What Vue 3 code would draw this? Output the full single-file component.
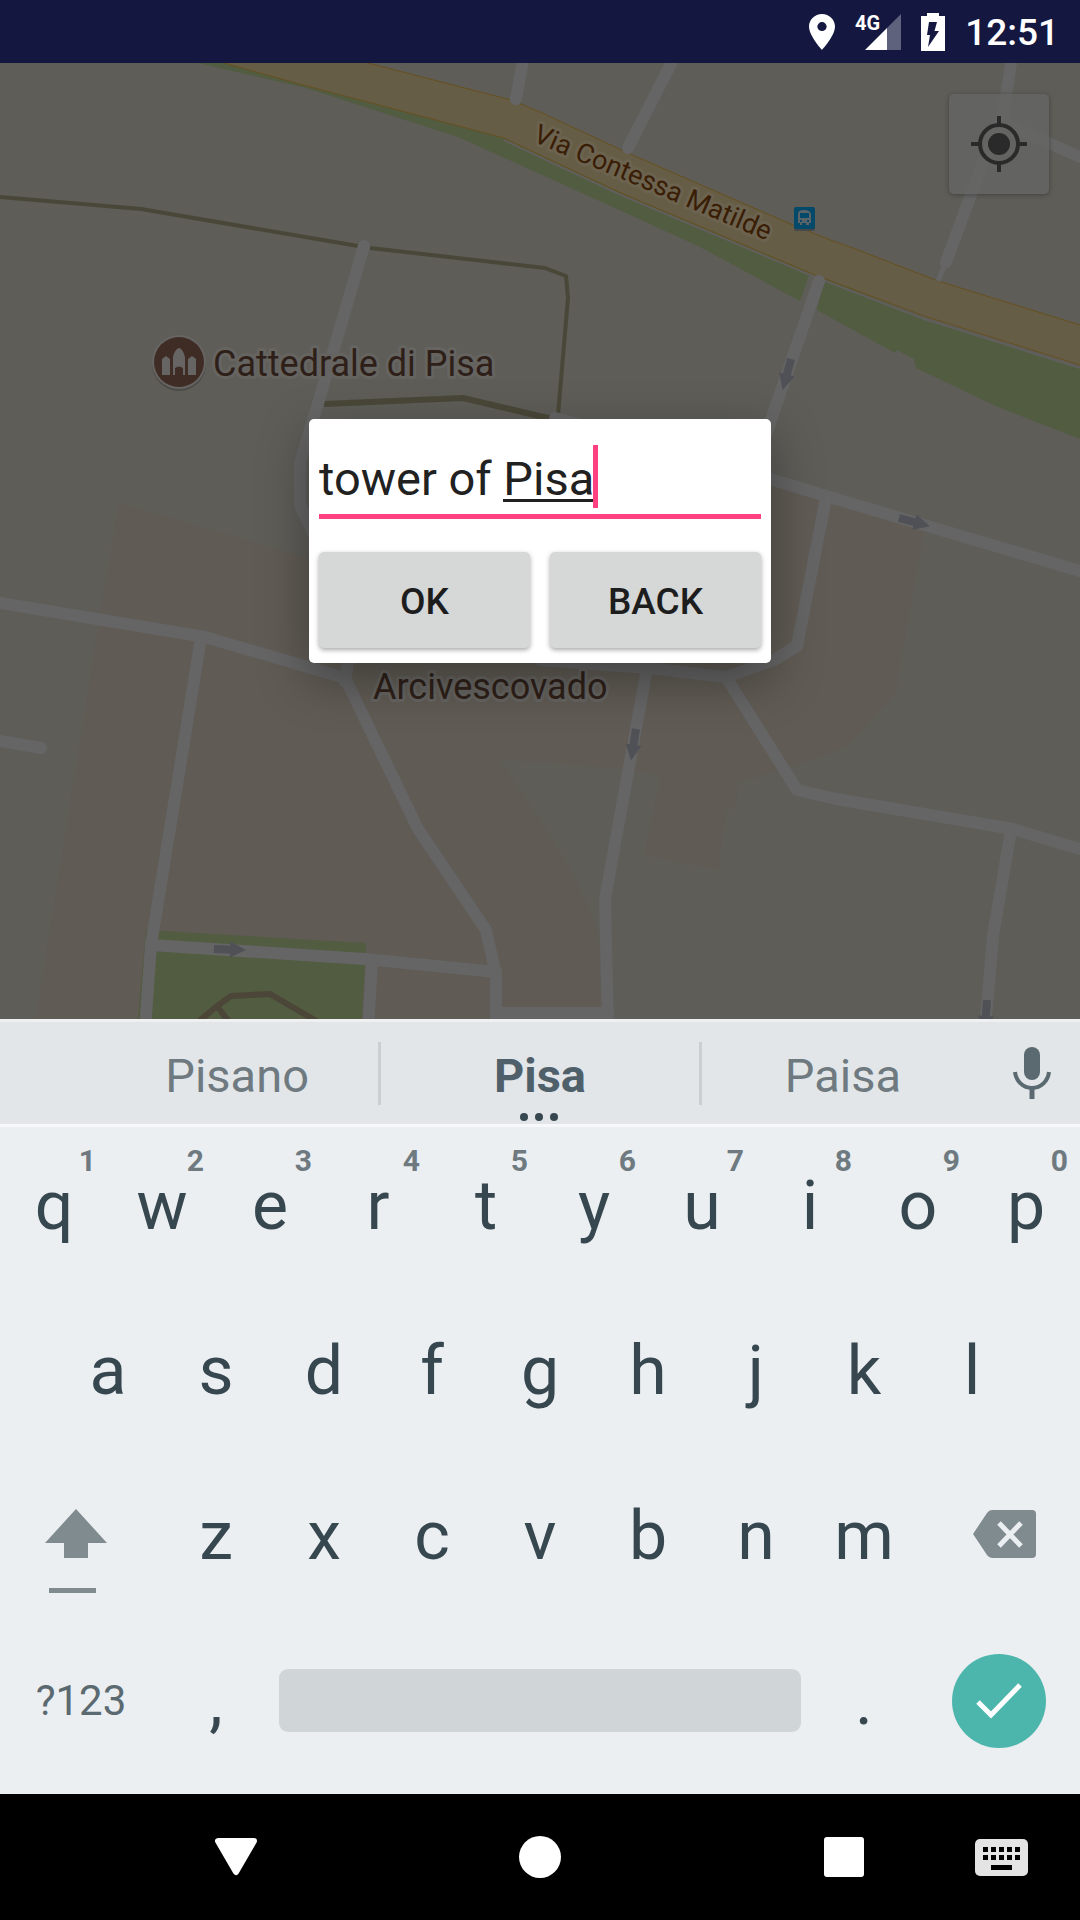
<script setup>
import { ref } from 'vue'

const query = ref('tower of Pisa')

const topRow = [
  ['q', 1], ['w', 2], ['e', 3], ['r', 4], ['t', 5],
  ['y', 6], ['u', 7], ['i', 8], ['o', 9], ['p', 0],
]
const homeRow = ['a', 's', 'd', 'f', 'g', 'h', 'j', 'k', 'l']
const bottomRow = ['z', 'x', 'c', 'v', 'b', 'n', 'm']

// Street centre lines on the map canvas
const streets = [
  'M525 50L516 99',
  'M678 50L628 148',
  'M1013 50L1002 122L984 160L946 262',
  'M1002 122L1080 157',
  'M819 281L772 417L758 460',
  'M364 246L319 400L300 463L300 505L330 570',
  'M555 418L600 430',
  'M0 603L205 637L345 678L418 829L486 930L496 975V1030',
  'M350 650L345 682',
  'M201 638L151 945L145 1030',
  'M151 945L365 959L496 972',
  'M372 962L368 1030',
  'M0 741L41 748',
  'M760 476L826 496L1080 571',
  'M826 498L797 646L774 660L726 677L647 668L540 660',
  'M726 677L797 790L836 799L1013 829L1080 849',
  'M1011 830L993 936L985 1030',
  'M647 668L605 899L608 1030',
]
const arrows = [
  [791, 359, 105],
  [899, 518, 15],
  [636, 729, 99],
  [214, 949, 2],
  [987, 1000, 94],
]
// Keycap holes of the input-method icon
const keyHoles = [0, 1].flatMap((r) => [0, 1, 2, 3, 4].map((c) => [8 + c * 8, 8 + r * 8]))
</script>

<template>
  <div class="screen">
    <header class="status">
      <svg width="26" height="36" viewBox="5 2 14 20" preserveAspectRatio="none" aria-hidden="true">
        <path fill="#fff" d="M12 2C8.130 2 5 5.130 5 9c0 5.250 7 13 7 13s7-7.750 7-13c0-3.870-3.130-7-7-7zm0 9.500a2.500 2.500 0 1 1 0-5 2.500 2.500 0 0 1 0 5z" />
      </svg>
      <svg width="46" height="46" viewBox="0 -4 46 46" aria-hidden="true">
        <path fill="#fff" fill-opacity=".32" d="M46 1V37H32V15z" />
        <path fill="#fff" d="M10 37L32 15V37z" />
        <text class="net" x="0" y="17">4G</text>
      </svg>
      <svg width="24" height="38" viewBox="0 0 24 38" aria-hidden="true">
        <path fill="#fff" d="M6 0H18V3H24V38H0V3H6z" />
        <path fill="#141840" d="M8 9H16L13.500 18H18L7 34L9 22H6z" />
      </svg>
      <time class="clock">12:51</time>
    </header>

    <main class="map">
      <svg class="canvas" viewBox="0 63 1080 956" preserveAspectRatio="xMidYMid slice" aria-hidden="true">
        <rect y="63" width="1080" height="956" fill="#5e5d58" />
        <path class="block" d="M119 503L308 558L771 480L924 530L895 695L857 735L843 748L812 760L788 768L738 782L735 808L726 810L718 870L644 855L661 775L623 769L540 762L499 759L540 820L574 875L598 930L602 1019H36L101 610z" />
        <path class="park" d="M198 63L306 88L458 137L540 174L626 213L700 247L800 301L810 272L504 137L224 63z" />
        <path class="park" d="M824 278L817 310L895 353L897 350L914 359L916 368L998 407L1080 439V368L924 318z" />
        <path class="park" d="M146 930L366 943L362 1019H138z" />
        <path class="trail" d="M198 1022L217 1006L231 996L270 994L318 1022M217 1006L229 1022" />
        <path class="path" d="M0 197L141 209L358 246M370 248L545 268L566 276L568 298L558 415" />
        <path class="path wide" d="M324 404L463 398L552 419" />
        <path class="verge" d="M504 140L540 157L621 195L815 277L924 319L1080 368" />
        <path fill="#665d46" d="M224 63L303 85L504 138L540 155L621 193L815 275L924 316L1080 365V325L938 281L845 245L833 241L793 225L630 154L540 112L511 100L368 63z" />
        <path class="kerb" d="M224 63L303 85L504 138L540 155L621 193L815 275L924 316L1080 365M368 63L511 100L540 112L630 154L793 225L833 241L845 245L938 281L1080 325" />
        <path v-for="d in streets" :key="d" class="street" :d="d" />
        <path class="street thin" d="M946 262L938 281" />
        <path class="street square" d="M491 1013H614" />
        <path
          v-for="a in arrows" :key="a.join()" fill="#505157"
          d="M0 -4H16V-8L32 0L16 8V4H0z" :transform="`translate(${a[0]} ${a[1]}) rotate(${a[2]})`"
        />

        <circle cx="179" cy="364" r="27" fill="#4c4b47" />
        <circle cx="179" cy="362" r="27" fill="#666563" />
        <circle cx="179" cy="362" r="25" fill="#3f2c25" />
        <path fill="#666563" d="M162 375V359L166 356L170 359V375zM188 375V359L192 356L196 359V375zM173 375V357C174 352 177 348 179 348S184 352 185 357V375H183V368Q179 365 175 368V375z" />

        <rect x="794" y="209" width="21" height="22" rx="2" fill="#46484a" />
        <rect x="794" y="207" width="21" height="22" rx="2" fill="#03496a" />
        <path fill="#5d6468" fill-rule="evenodd" d="M798 214Q798 210 804 210T811 214V223H809V225H806V223H802V225H800V223H798zM800 213V218H809V213zM800 220V222H802V220zM807 220V222H809V220z" />

        <text class="label" x="213" y="376">Cattedrale di Pisa</text>
        <text class="label" x="373" y="699">Arcivescovado</text>
        <text class="label road" transform="translate(532 141) rotate(23)">Via Contessa Matilde</text>
      </svg>

      <button class="locate" type="button" aria-label="My location">
        <svg width="56" height="56" viewBox="0 0 56 56">
          <circle cx="28" cy="28" r="19" fill="none" stroke="#2a2a2a" stroke-width="4" />
          <circle cx="28" cy="28" r="11" fill="#2a2a2a" />
          <path stroke="#2a2a2a" stroke-width="4" d="M28 0V8M28 48V56M0 28H8M48 28H56" />
        </svg>
      </button>

      <form class="dialog" role="dialog" aria-label="Search place" @submit.prevent>
        <div class="field">
          <input v-model="query" class="query" type="text" aria-label="Place" />
          <span class="composing"></span>
          <span class="caret"></span>
        </div>
        <div class="actions">
          <button class="action" type="submit">OK</button>
          <button class="action" type="button">BACK</button>
        </div>
      </form>
    </main>

    <section class="keyboard" aria-label="Keyboard">
      <div class="strip">
        <button class="hint" type="button">Pisano</button>
        <span class="rule"></span>
        <button class="hint best" type="button">
          Pisa
          <svg class="more" width="38" height="8" viewBox="0 0 38 8" aria-hidden="true">
            <g fill="#37474f"><circle cx="4" cy="4" r="4" /><circle cx="19" cy="4" r="4" /><circle cx="34" cy="4" r="4" /></g>
          </svg>
        </button>
        <span class="rule"></span>
        <button class="hint" type="button">Paisa</button>
        <button class="mic" type="button" aria-label="Voice input">
          <svg width="38" height="52" viewBox="0 0 38 52">
            <rect x="11" y="0" width="16" height="33" rx="8" fill="#5b6a70" />
            <path fill="none" stroke="#5b6a70" stroke-width="4" d="M2 25C3 34 10 41 19 41S35 34 36 25" />
            <path stroke="#5b6a70" stroke-width="5" d="M19 41V52" />
          </svg>
        </button>
      </div>

      <div class="keys">
        <div class="row">
          <button v-for="[letter, digit] in topRow" :key="letter" class="key" type="button">
            {{ letter }}<span class="digit">{{ digit }}</span>
          </button>
        </div>
        <div class="row inset">
          <button v-for="letter in homeRow" :key="letter" class="key" type="button">{{ letter }}</button>
        </div>
        <div class="row">
          <button class="key edge shift" type="button" aria-label="Shift">
            <svg width="62" height="84" viewBox="0 0 62 84">
              <path fill="#808b8f" d="M31 0L62 34H43V49H19V34H0zM4 79H51V84H4z" />
            </svg>
          </button>
          <button v-for="letter in bottomRow" :key="letter" class="key" type="button">{{ letter }}</button>
          <button class="key edge erase" type="button" aria-label="Backspace">
            <svg width="63" height="48" viewBox="0 0 63 48">
              <path fill="#808b8f" d="M0 24L14 3Q16 0 19 0H59Q63 0 63 4V44Q63 48 59 48H19Q16 48 14 45z" />
              <path stroke="#ebeff2" stroke-width="5" d="M26 13L48 36M48 13L26 36" />
            </svg>
          </button>
        </div>
        <div class="row">
          <button class="key edge symbols" type="button">?123</button>
          <button class="key" type="button">,</button>
          <button class="key space" type="button" aria-label="Space"><span class="bar"></span></button>
          <button class="key" type="button">.</button>
          <button class="key edge" type="button" aria-label="Done">
            <span class="done">
              <svg width="46" height="36" viewBox="0 0 46 36">
                <path fill="none" stroke="#fff" stroke-width="5" d="M2 19L15 32L44 2" />
              </svg>
            </span>
          </button>
        </div>
      </div>
    </section>

    <nav class="nav" aria-label="System">
      <button type="button" aria-label="Back">
        <svg width="42" height="38" viewBox="0 0 42 38">
          <path fill="#fff" stroke="#fff" stroke-width="6" stroke-linejoin="round" d="M3 3H39L21 34z" />
        </svg>
      </button>
      <button type="button" aria-label="Home">
        <svg width="42" height="42" viewBox="0 0 42 42"><circle cx="21" cy="21" r="21" fill="#fff" /></svg>
      </button>
      <button type="button" aria-label="Recent apps">
        <svg width="40" height="40" viewBox="0 0 40 40"><rect width="40" height="40" rx="3" fill="#fff" /></svg>
      </button>
      <button type="button" aria-label="Switch keyboard">
        <svg width="53" height="37" viewBox="0 0 53 37">
          <rect width="53" height="37" rx="5" fill="#e4e4e4" />
          <rect v-for="h in keyHoles" :key="h.join()" :x="h[0]" :y="h[1]" width="5" height="5" />
          <rect x="16" y="26" width="21" height="5" />
        </svg>
      </button>
    </nav>
  </div>
</template>

<style>
body {
  background: #000;
}
</style>

<style scoped>
.screen {
  display: flex;
  flex-direction: column;
  min-height: 100vh;
  font-family: Roboto, "Liberation Sans", sans-serif;
}

button {
  padding: 0;
  border: 0;
  background: none;
  font-family: inherit;
  color: inherit;
}

svg {
  display: block;
  flex: none;
}

/* Status bar */
.status {
  display: flex;
  align-items: center;
  justify-content: flex-end;
  gap: 20px;
  box-sizing: border-box;
  height: 63px;
  padding-right: 21px;
  background: #141840;
  color: #fff;
}

.net {
  fill: #fff;
  font-size: 20px;
  font-weight: 700;
}

.clock {
  padding-top: 2px;
  font-size: 37px;
  font-weight: 500;
}

/* Map */
.map {
  position: relative;
  display: grid;
  flex: 1;
  place-items: center;
  min-height: 400px;
  overflow: hidden;
}

.canvas {
  position: absolute;
  inset: 0;
  width: 100%;
  height: 100%;
}

.block {
  fill: #605b54;
}

.park {
  fill: #525c41;
}

.street {
  fill: none;
  stroke: #656566;
  stroke-width: 12;
  stroke-linecap: round;
  stroke-linejoin: round;
}

.thin {
  stroke-width: 5;
  stroke-linecap: butt;
}

.square {
  stroke-linecap: butt;
}

.path {
  fill: none;
  stroke: #494838;
  stroke-width: 4;
  stroke-linejoin: round;
}

.wide {
  stroke-width: 6;
}

.trail {
  fill: none;
  stroke: #4c4638;
  stroke-width: 6;
}

.verge {
  fill: none;
  stroke: #605f5b;
  stroke-width: 2;
}

.kerb {
  fill: none;
  stroke: #67501f;
  stroke-width: 1;
}

.label {
  fill: #2e2018;
  stroke: #656461;
  stroke-width: 6;
  stroke-linejoin: round;
  paint-order: stroke;
  font-size: 36px;
}

.road {
  fill: #3a1d05;
  stroke: #6b634f;
  font-size: 27px;
}

.locate {
  position: absolute;
  top: 31px;
  right: 31px;
  display: grid;
  place-items: center;
  width: 100px;
  height: 100px;
  border-radius: 5px;
  background: rgba(102, 101, 100, 0.75);
  box-shadow: 0 1px 5px rgba(0, 0, 0, 0.3);
}

/* Dialog */
.dialog {
  position: relative;
  display: flex;
  flex-direction: column;
  gap: 33px;
  box-sizing: border-box;
  width: 462px;
  max-width: 100%;
  padding: 0 10px 15px;
  border-radius: 5px;
  background: #fff;
  box-shadow: 0 16px 50px rgba(0, 0, 0, 0.35);
}

.field {
  position: relative;
}

.query {
  display: block;
  box-sizing: border-box;
  width: 100%;
  height: 100px;
  padding: 24px 0 0;
  border: 0;
  border-bottom: 5px solid #ff4081;
  outline: 0;
  background: none;
  color: #212121;
  font-family: inherit;
  font-size: 47px;
}

.composing {
  position: absolute;
  top: 80px;
  left: 184px;
  width: 91px;
  height: 3px;
  background: #212121;
}

.caret {
  position: absolute;
  top: 26px;
  left: 274px;
  width: 5px;
  height: 63px;
  background: #ff4081;
}

.actions {
  display: flex;
  gap: 20px;
}

.action {
  flex: 1;
  height: 96px;
  padding-top: 2px;
  border-radius: 5px;
  background: #d6d7d7;
  box-shadow: 0 2px 5px rgba(0, 0, 0, 0.35);
  color: #1d1d1d;
  font-size: 37px;
  font-weight: 500;
}

/* Keyboard */
.keyboard {
  background: #ebeff2;
  color: #37474f;
}

.strip {
  display: flex;
  align-items: stretch;
  box-sizing: border-box;
  height: 108px;
  padding-left: 96px;
  border-top: 3px solid #eff0f1;
  border-bottom: 3px solid #f6f8f9;
  background: #e2e6e9;
}

.hint {
  position: relative;
  flex: 8;
  padding-top: 4px;
  color: #6f7a80;
  font-size: 47px;
}

.best {
  flex: 9;
  color: #50606a;
  font-weight: 700;
}

.more {
  position: absolute;
  bottom: 3px;
  left: calc(50% - 20px);
}

.rule {
  width: 3px;
  margin: 20px 0 19px;
  background: #cacfd2;
}

.mic {
  display: grid;
  place-items: center;
  width: 96px;
}

.keys {
  padding-bottom: 7px;
}

.row {
  display: flex;
}

.inset {
  padding: 0 5%;
}

.key {
  position: relative;
  display: flex;
  flex: 0 0 10vw;
  align-items: center;
  justify-content: center;
  box-sizing: border-box;
  height: 165px;
  padding-bottom: 8px;
  font-size: 68px;
}

.edge {
  flex-basis: 15vw;
}

.digit {
  position: absolute;
  top: 16px;
  right: 12px;
  color: #6f7a80;
  font-size: 30px;
  font-weight: 700;
}

.shift {
  padding-top: 30px;
  padding-right: 10px;
}

.erase {
  padding-bottom: 12px;
  padding-left: 10px;
}

.symbols {
  color: #5b6a70;
  font-size: 42px;
}

.space {
  flex-basis: 50vw;
}

.bar {
  flex: 1;
  height: 63px;
  margin: 0 9px;
  border-radius: 9px;
  background: #d0d5d8;
}

.done {
  display: grid;
  place-items: center;
  width: 94px;
  height: 94px;
  border-radius: 50%;
  background: #4db6ac;
}

/* Navigation bar */
.nav {
  display: grid;
  grid-template-columns: 158fr 450fr 158fr 157fr;
  height: 126px;
  padding-left: 157px;
  background: #000;
}

.nav button {
  display: grid;
  place-items: center;
}
</style>
